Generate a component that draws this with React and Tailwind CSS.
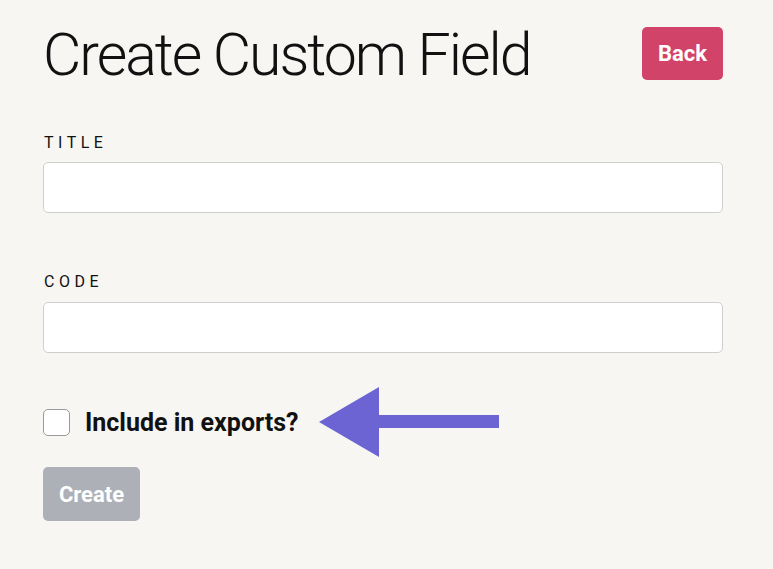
export default function App() {
  return (
    <main
      className="min-h-screen bg-[#f7f6f3] pt-[25px] pl-[43px] pr-[50px] text-[#111]"
      style={{ fontFamily: 'Roboto, "Liberation Sans", sans-serif' }}
    >
      <div className="flex items-start justify-between">
        <h1 className="text-[59px] font-light leading-none tracking-[-2px]">
          Create Custom Field
        </h1>
        <button className="mt-[2px] h-[53px] w-[81px] rounded-[5px] bg-[#d24369] text-[22px] font-bold text-white">
          Back
        </button>
      </div>

      <form className="flex flex-col">
        {/* Title */}
        <label className="mt-[51px] text-[16px] leading-none tracking-[4.5px] pl-[1px]">TITLE</label>
        <input
          type="text"
          className="mt-[11px] h-[51px] w-full rounded-[5px] border border-[#cfcfcf] bg-white px-3 outline-none"
        />

        {/* Code */}
        <label className="mt-[61px] text-[16px] leading-none tracking-[4.5px] pl-[1px]">CODE</label>
        <input
          type="text"
          className="mt-[12px] h-[51px] w-full rounded-[5px] border border-[#cfcfcf] bg-white px-3 outline-none"
        />

        {/* Include in exports */}
        <div className="mt-[34px] flex items-center">
          <input
            type="checkbox"
            className="h-[27px] w-[27px] appearance-none rounded-[5px] border border-[#9a9a9a] bg-white"
          />
          <span className="ml-[15px] text-[25px] font-bold leading-none">Include in exports?</span>
          <svg width="180" height="70" viewBox="0 0 180 70" className="ml-[20px]">
            <polygon points="0,35 60,0 60,70" fill="#6b64d2" />
            <rect x="59" y="28" width="121" height="13" fill="#6b64d2" />
          </svg>
        </div>

        <div className="mt-[10px]">
          <button
            type="button"
            className="h-[54px] w-[97px] rounded-[5px] bg-[#adb1b7] text-[22px] font-bold text-white"
          >
            Create
          </button>
        </div>
      </form>
    </main>
  );
}
